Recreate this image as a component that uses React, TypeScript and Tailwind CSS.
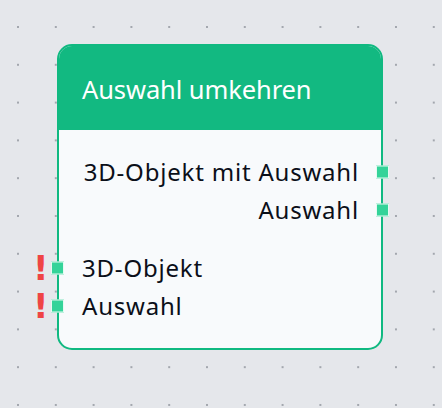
import React from "react";

const font = { fontFamily: '"Noto Sans", "Open Sans", sans-serif' };

function Port({ side }: { side: "left" | "right" }) {
  return (
    <span
      className={
        "absolute top-1/2 -translate-y-1/2 w-[13px] h-[13px] bg-[#34d399] border border-[#e6faf2] " +
        (side === "right" ? "right-[-31px]" : "left-[-31px]")
      }
    />
  );
}

function Bang() {
  return (
    <span
      className="absolute left-[-49px] top-1/2 -translate-y-1/2 text-[#ef4444] text-[34px] font-bold leading-none"
      style={{ fontFamily: '"DejaVu Sans", sans-serif' }}
    >
      !
    </span>
  );
}

export default function App() {
  return (
    <div
      className="w-[442px] h-[408px] bg-[#e5e7eb] bg-[radial-gradient(circle,#a3a7ae_1px,transparent_1.2px)] bg-[size:37.8px_37.8px] bg-[position:-0.9px_8.1px] pt-[44px] pl-[57px]"
      style={font}
    >
      <div className="w-[326px] h-[306px] rounded-[15px] border-2 border-[#10b981] bg-[#f8fafc] flex flex-col">
        <div className="h-[84px] bg-[#12b981] rounded-t-[13px] flex items-center pl-[23px] pt-[2px] text-white text-[25.5px] tracking-[-0.1px] whitespace-nowrap">
          Auswahl umkehren
        </div>
        <div className="flex flex-col pt-[23px] px-[23px] text-[#0b0f19] text-[24px] tracking-[0.8px] whitespace-nowrap">
          <div className="relative h-[38px] flex items-center justify-end">
            <span className="mr-[-1px]">3D-Objekt mit Auswahl</span>
            <Port side="right" />
          </div>
          <div className="relative h-[38px] flex items-center justify-end">
            <span className="mr-[-1px]">Auswahl</span>
            <Port side="right" />
          </div>
          <div className="h-[20px]" />
          <div className="relative h-[38px] flex items-center">
            <Bang />
            <Port side="left" />
            3D-Objekt
          </div>
          <div className="relative h-[38px] flex items-center">
            <Bang />
            <Port side="left" />
            Auswahl
          </div>
        </div>
      </div>
    </div>
  );
}
